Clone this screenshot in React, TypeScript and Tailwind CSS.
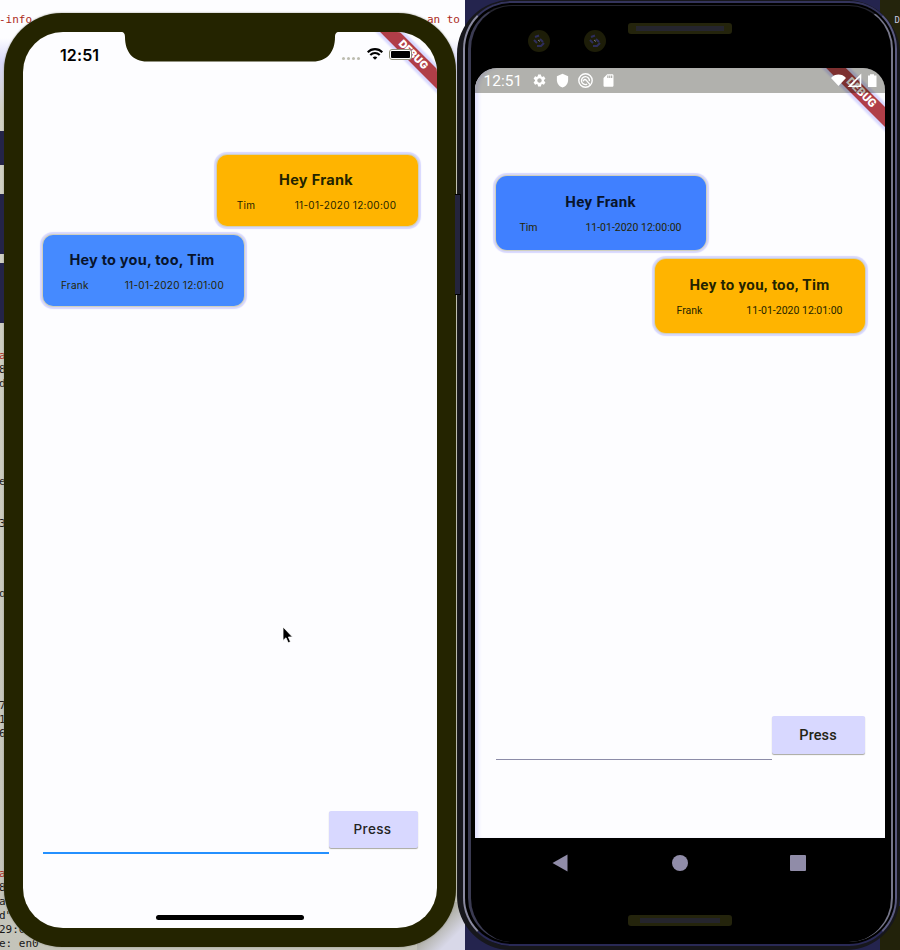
import React from "react";
import { MdSettings, MdShield, MdSdCard } from "react-icons/md";

type Message = { text: string; from: string; date: string; mine: boolean };

const iosMessages: Message[] = [
  { text: "Hey Frank", from: "Tim", date: "11-01-2020 12:00:00", mine: true },
  { text: "Hey to you, too, Tim", from: "Frank", date: "11-01-2020 12:01:00", mine: false },
];

const androidMessages: Message[] = [
  { text: "Hey Frank", from: "Tim", date: "11-01-2020 12:00:00", mine: false },
  { text: "Hey to you, too, Tim", from: "Frank", date: "11-01-2020 12:01:00", mine: true },
];

// Terminal output visible around the edge of the simulator, keyed by line number.
const terminal: Record<number, { text: string; red?: boolean }> = {
  0: { text: "-info", red: true },
  24: { text: "a", red: true },
  25: { text: "8" },
  26: { text: "d" },
  33: { text: "e" },
  36: { text: "3" },
  41: { text: "o" },
  49: { text: "7" },
  50: { text: "1" },
  51: { text: "6" },
  61: { text: "a", red: true },
  62: { text: "8" },
  63: { text: "a" },
  64: { text: 'd"' },
  65: { text: "29:0" },
  66: { text: "e: en0" },
};

function Desktop() {
  return (
    <div className="flex h-full w-full font-['DejaVu_Sans_Mono',monospace] text-[11px] leading-[14px]">
      <div className="flex w-[465px] justify-between bg-[linear-gradient(180deg,#fdfdff_0px,#fdfdff_38px,#d8d8fa_62px,#d2d2c4_110px,#c4c4ba_100%)]">
        <div className="-ml-px w-24 pt-[13px]">
          {Array.from({ length: 67 }, (_, i) => (
            <div key={i} className={terminal[i]?.red ? "h-3.5 text-[#ac2a1c]" : "h-3.5 text-[#181818]"}>
              {terminal[i]?.text}
            </div>
          ))}
        </div>
        <div className="flex flex-col items-end justify-between pt-[13px]">
          <div className="whitespace-pre pr-[5px] text-[#ac2a1c]">an to</div>
          <div className="h-12 w-12 bg-[linear-gradient(135deg,#b0b0a8_45%,#d8d8e8_75%)]" />
        </div>
      </div>
      <div className="flex flex-1 justify-end bg-[#24244e]">
        <div className="flex w-5 flex-col justify-between">
          <div className="flex h-14 justify-end bg-[#24240c] pt-[13px] text-[9px] text-[#c8c8e0]">D</div>
          <div className="h-11 bg-[#22220a]" />
        </div>
      </div>
    </div>
  );
}

function IosBubble({ m }: { m: Message }) {
  return (
    <div
      className={`flex h-[71px] w-[201px] flex-col rounded-[10px] pt-[15px] text-[#242400] shadow-[0_0_1px_1px_#d0d0b8,0_0_1px_3px_#d8d8ff] ${
        m.mine ? "-mr-px self-end bg-[#ffb400]" : "bg-[#458aff]"
      }`}
    >
      <div className={`pr-[3px] text-center text-[14.5px] font-bold leading-5 ${m.mine ? "tracking-[0.3px]" : "tracking-[0.22px] text-[#08142c]"}`}>{m.text}</div>
      <div className="mt-[7px] flex justify-around pr-0.5 text-[10px] leading-4 tracking-[0.28px]">
        <span>{m.from}</span>
        <span>{m.date}</span>
      </div>
    </div>
  );
}

function AndroidBubble({ m }: { m: Message }) {
  return (
    <div
      className={`flex h-[74px] w-[210px] flex-col rounded-[11px] pt-4 text-[#242400] shadow-[0_0_1px_1px_#d0d0b8,0_0_1px_3px_#d8d8ff] ${
        m.mine ? "self-end bg-[#ffb400]" : "bg-[#4080ff]"
      }`}
    >
      <div className={`text-center text-[15px] font-bold leading-5 tracking-[0.32px] ${m.mine ? "" : "text-[#08142c]"}`}>{m.text}</div>
      <div className="mt-2 flex justify-around text-[10.5px] leading-4">
        <span>{m.from}</span>
        <span>{m.date}</span>
      </div>
    </div>
  );
}

function IPhone() {
  return (
    <div className="absolute left-1 top-[13px] h-[934px] w-[452px] rounded-[58px] bg-[#242400] p-[19px] font-['Inter',sans-serif] shadow-[0_0_2px_#8c8c80]">
      <div className="relative flex h-[896px] w-[414px] flex-col overflow-hidden rounded-[40px] bg-[#fdfdff]">
        <div className="absolute left-[390px] top-[22.5px] flex h-[14px] w-[120px] -translate-x-1/2 -translate-y-1/2 rotate-45 items-center justify-center bg-[#b03e48] text-[10.5px] font-black text-white shadow-[0_0_2px_3px_#d8d8ff]">
          DEBUG
        </div>
        <svg className="absolute left-[98px] top-0" width="218" height="30" viewBox="0 0 218 30">
          <path d="M0 0C3 0 4 2 4 5C4 20 12 29.5 26 29.5H192C206 29.5 214 20 214 5C214 2 215 0 218 0Z" fill="#242400" />
        </svg>
        <div className="relative flex h-[46px] items-center justify-between pl-[37px] pr-[25px]">
          <div className="text-[16px] font-semibold leading-5 tracking-[0.1px] text-black">12:51</div>
          <div className="-mt-0.5 flex items-center">
            <div className="mr-[7px] mt-2 flex gap-[2px]">
              {[0, 1, 2, 3].map((i) => (
                <span key={i} className="h-[3px] w-[3px] rounded-full bg-[#bdbdb0]" />
              ))}
            </div>
            <svg width="16" height="12" viewBox="0 0 16 12" fill="none" stroke="#000" strokeWidth="2.1">
              <path d="M.7 4.2C4.8.1 11.2.1 15.3 4.2M3.3 7C6 4.4 10 4.4 12.7 7" />
              <path d="M8 11.8L5.7 9.4C7 8.3 9 8.3 10.3 9.4Z" fill="#000" stroke="none" />
            </svg>
            <div className="ml-1.5 h-[11px] w-[23px] rounded-[3px] border border-[#90907c] bg-white p-px">
              <div className="h-full w-full rounded-[1px] bg-black" />
            </div>
          </div>
        </div>
        <div className="flex flex-1 flex-col gap-[9px] px-5 pt-[77px]">
          {iosMessages.map((m) => (
            <IosBubble key={m.text} m={m} />
          ))}
        </div>
        <div className="mx-5 flex h-[43px]">
          <div className="flex-1 border-b-2 border-[#2490ff]" />
          <div className="-mr-px flex h-[37px] w-[89px] items-center justify-center rounded-[2px] bg-[#d8d8ff] pr-0.5 text-[13.5px] font-medium tracking-[0.35px] text-[#242424] shadow-[0_1px_1px_#a8a8a0]">
            Press
          </div>
        </div>
        <div className="mx-auto mb-[8px] mt-[61px] h-[5px] w-[148px] rounded-full bg-black" />
      </div>
    </div>
  );
}

function CameraLens() {
  return (
    <div className="flex h-[22px] w-[22px] items-center justify-center rounded-full bg-[#1d1d08]">
      <svg width="14" height="14" viewBox="0 0 14 14" fill="none" stroke="#2e2e5c" strokeWidth="2">
        <path d="M3 3L7 1.5M2 6L5 9M8 5L11 8M5 12H9L12 9" />
        <path d="M6 6L8 7.5" stroke="#77778c" strokeWidth="1" />
      </svg>
    </div>
  );
}

function AndroidPhone() {
  return (
    <div className="absolute left-[457px] top-0 h-[950px] w-[443px] rounded-[54px] border-l-[6px] border-r-[3px] border-t border-b-4 border-[#17171c] bg-black font-['Roboto',sans-serif]">
      <div className="h-full rounded-[48px] border-2 border-b-[#292955] border-l-[#8a8aa0] border-r-[#5b5b80] border-t-[#34345c] p-[2.5px] pt-[1.5px]">
        <div className="flex h-full flex-col rounded-[44px] border-l-[3px] border-r-2 border-l-[#3b3b52] border-r-[#77778a] px-1 [border-top:1px_solid_#24242e]">
          <div className="flex h-[62px] shrink-0 pl-[53px] pt-[24px]">
            <CameraLens />
            <div className="ml-[34px]">
              <CameraLens />
            </div>
            <div className="-mt-[7px] ml-[22px] h-[11px] w-[104px] rounded-[3px] bg-[#24240c] px-2 py-[3px]">
              <div className="h-full bg-[#25252e]" />
            </div>
          </div>
          <div className="relative flex h-[770px] w-[410px] shrink-0 flex-col overflow-hidden rounded-t-[22px] bg-[#fdfdff] shadow-[inset_5px_0_4px_-2px_#dedeff]">
            <div className="absolute left-[386px] top-[25.5px] flex h-[14px] w-[130px] -translate-x-1/2 -translate-y-1/2 rotate-45 items-center justify-center bg-[#b03e48] text-[11.5px] font-black text-white shadow-[0_0_2px_3px_#d8d8ff]">
              DEBUG
            </div>
            <div className="relative flex h-[25px] shrink-0 items-center bg-[#14140052] pl-[9px] pr-[8px] text-white">
              <span className="w-[48px] pt-0.5 text-[15.5px] leading-5">12:51</span>
              <div className="flex items-center gap-[8px]">
                <MdSettings size={15} />
                <MdShield size={15} />
                <svg width="15" height="15" viewBox="0 0 15 15" fill="none" stroke="#fff" strokeWidth="1.4">
                  <circle cx="7.5" cy="7.5" r="6.7" />
                  <path d="M9.2 11.2A4 4 0 1 1 11.4 8.2" />
                  <path d="M5 8.2C6 6 7.4 6 8.4 7.4L12 11.6" />
                </svg>
                <MdSdCard size={15} />
              </div>
              <div className="ml-auto flex items-center">
                <svg width="46" height="15" viewBox="0 0 46 15" fill="#fff">
                  <path d="M0 5C4 .4 11 .4 15 5L7.5 13Z" />
                  <path d="M29.5 2.5V13.2H18.5Z" fill="none" stroke="#fff" strokeWidth="1.6" />
                  <path d="M39 1.3H43V2.5H45.5V14H37V2.5H39Z" />
                </svg>
              </div>
            </div>
            <div className="flex flex-1 flex-col gap-[9px] pl-[21px] pr-5 pt-[83px]">
              {androidMessages.map((m) => (
                <AndroidBubble key={m.text} m={m} />
              ))}
            </div>
            <div className="mb-[78px] ml-[21px] mr-5 flex h-11">
              <div className="flex-1 border-b border-[#8c8ca8]" />
              <div className="flex h-[38px] w-[93px] items-center justify-center rounded-[2px] bg-[#d8d8ff] pt-0.5 text-[14.5px] font-medium tracking-[0.1px] text-[#242414] shadow-[0_1px_1px_#a8a8a0]">
                Press
              </div>
            </div>
          </div>
          <div className="flex h-[50px] shrink-0 items-center justify-between pl-[77px] pr-[81px]">
            <svg width="16" height="18" viewBox="0 0 16 18">
              <path d="M.5 9L15.5 .5V17.5Z" fill="#908ca8" />
            </svg>
            <div className="ml-[3px] h-4 w-4 rounded-full bg-[#908ca8]" />
            <div className="h-4 w-4 rounded-[1px] bg-[#908ca8]" />
          </div>
          <div className="ml-[153px] mt-[27px] h-[11px] w-[104px] rounded-[3px] bg-[#24240c] px-3 py-[3px]">
            <div className="h-full bg-[#24242c]" />
          </div>
        </div>
      </div>
    </div>
  );
}

export default function App() {
  return (
    <div className="relative h-[950px] w-[900px] overflow-hidden bg-[#24244e]">
      <Desktop />
      <AndroidPhone />
      <IPhone />
      {/* Hardware buttons on the phone's sides */}
      <div className="absolute left-0 top-[131px] h-[34px] w-1 bg-[#242448]" />
      <div className="absolute left-0 top-[194px] h-[60px] w-1 bg-[#242448]" />
      <div className="absolute left-0 top-[263px] h-[60px] w-1 bg-[#242448]" />
      <div className="absolute left-[455px] top-[194px] h-[101px] w-[6px] border-y border-r border-black bg-[#24243c]" />
      {/* Mouse pointer */}
      <svg className="absolute left-[282px] top-[626px]" width="12" height="18" viewBox="0 0 12 18">
        <path d="M1 1V14.5L4 11.8L6.2 16.8L8.5 15.8L6.4 11H10.5Z" fill="#000" stroke="#fff" strokeWidth=".8" />
      </svg>
    </div>
  );
}
